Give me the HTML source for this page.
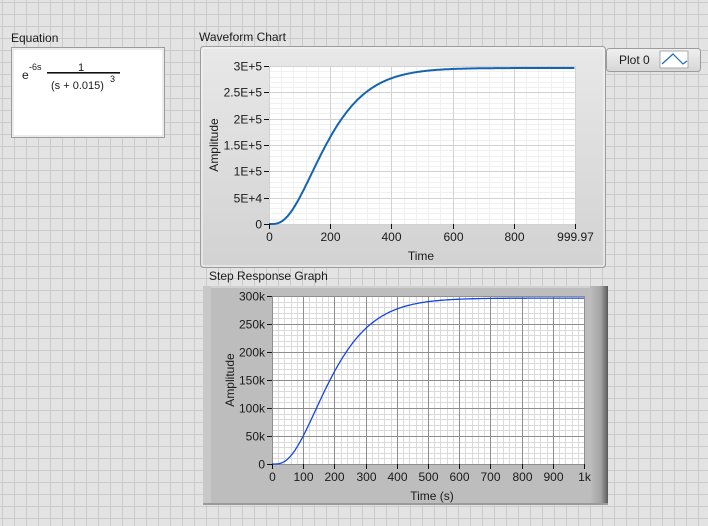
<!DOCTYPE html>
<html><head><meta charset="utf-8"><style>
html,body{margin:0;padding:0;width:708px;height:526px;overflow:hidden;background:#e3e3e3;}
svg{display:block;font-family:"Liberation Sans",sans-serif;}
text{font-size:11px;fill:#1a1a1a;}
</style></head><body>
<svg id="s" width="708" height="526" xmlns="http://www.w3.org/2000/svg">
<defs>
<pattern id="bg" x="2" y="2" width="12" height="12" patternUnits="userSpaceOnUse">
<rect width="12" height="12" fill="#e3e3e3"/><path d="M0.5 0V12M0 0.5H12" stroke="#cbcbcb" stroke-width="1"/>
</pattern>
<linearGradient id="wf" x1="0" y1="0" x2="0" y2="1"><stop offset="0" stop-color="#e8e8e8"/><stop offset="1" stop-color="#d2d2d2"/></linearGradient>
<linearGradient id="rs" x1="0" y1="0" x2="1" y2="0"><stop offset="0" stop-color="#bdbdbd"/><stop offset="0.6" stop-color="#a4a4a4"/><stop offset="1" stop-color="#5a5a5a"/></linearGradient>
<linearGradient id="lg" x1="0" y1="0" x2="0" y2="1"><stop offset="0" stop-color="#f0f0f0"/><stop offset="1" stop-color="#d6d6d6"/></linearGradient>
</defs>
<rect width="708" height="526" fill="url(#bg)"/>

<!-- Equation -->
<text x="11" y="42" style="font-size:12px">Equation</text>
<rect x="11.5" y="47.5" width="153" height="90" fill="#fff" stroke="#9a9a9a"/>
<rect x="13" y="49" width="150" height="87" fill="none" stroke="#d8d8d8"/>
<text x="22" y="79" style="font-size:12px">e</text>
<text x="29" y="70" style="font-size:9px">-6s</text>
<text x="78" y="71" style="font-size:11px">1</text>
<rect x="47" y="72" width="73" height="1.6" fill="#111"/>
<text x="51" y="89" style="font-size:11px">(s + 0.015)</text>
<text x="110" y="82" style="font-size:9px">3</text>

<!-- Waveform chart -->
<text x="199" y="41" style="font-size:12px">Waveform Chart</text>
<rect x="200.5" y="46.5" width="405" height="221" rx="3" fill="url(#wf)" stroke="#9c9c9c"/>
<rect x="202" y="48" width="402" height="218" rx="2" fill="none" stroke="#f6f6f6"/>
<g id="top"></g>
<text x="218" y="145" transform="rotate(-90 218 145)" text-anchor="middle" style="font-size:12px">Amplitude</text>
<text x="421" y="260" text-anchor="middle" style="font-size:12px">Time</text>

<!-- Legend -->
<rect x="606.5" y="48.5" width="94" height="23" rx="3" fill="url(#lg)" stroke="#9c9c9c"/>
<text x="619" y="64" style="font-size:12px">Plot 0</text>
<rect x="660" y="51" width="28" height="17" fill="#fff" stroke="#aaa"/>
<path d="M662 64 L673 54 L683 64 L687 61" fill="none" stroke="#1e6bb8" stroke-width="1.2"/>

<!-- Step response -->
<text x="209" y="280" style="font-size:12px">Step Response Graph</text>
<rect x="203" y="286" width="405" height="219" fill="#bdbdbd"/>
<rect x="203" y="286" width="405" height="2" fill="#d0d0d0"/>
<rect x="203" y="286" width="8" height="219" fill="#c8c8c8"/>
<rect x="590" y="286" width="18" height="219" fill="url(#rs)"/>
<rect x="203" y="503" width="405" height="2" fill="#9a9a9a"/>
<g id="bot"></g>
<text x="234" y="380" transform="rotate(-90 234 380)" text-anchor="middle" style="font-size:12px">Amplitude</text>
<text x="432" y="500" text-anchor="middle" style="font-size:12px">Time (s)</text>
</svg>
<script>
var NS="http://www.w3.org/2000/svg";
function el(p,t,a,txt){var e=document.createElementNS(NS,t);for(var k in a)e.setAttribute(k,a[k]);if(txt!=null)e.textContent=txt;p.appendChild(e);return e;}
function f(t){if(t<6)return 0;var x=0.015*(t-6);var K=1/Math.pow(0.015,3);return K*(1-Math.exp(-x)*(1+x+x*x/2));}
function plot(g,o){
 el(g,'rect',{x:o.x0,y:o.y0,width:o.x1-o.x0,height:o.y1-o.y0,fill:'#fff'});
 var d='';
 for(var i=0;i<=o.nxm;i++){var x=Math.round(o.x0+(o.x1-o.x0)*i/o.nxm)+0.5;d+='M'+x+' '+o.y0+'V'+o.y1;}
 for(var i=0;i<=o.nym;i++){var y=Math.round(o.y0+(o.y1-o.y0)*i/o.nym)+0.5;d+='M'+o.x0+' '+y+'H'+o.x1;}
 el(g,'path',{d:d,stroke:o.minc,'stroke-width':1,fill:'none'});
 d='';
 o.xt.forEach(function(v){var x=Math.round(o.x0+(o.x1-o.x0)*v/o.xmax)+0.5;d+='M'+x+' '+o.y0+'V'+o.y1;});
 o.yt.forEach(function(v){var y=Math.round(o.y1-(o.y1-o.y0)*v/o.ymax)+0.5;d+='M'+o.x0+' '+y+'H'+o.x1;});
 el(g,'path',{d:d,stroke:o.majc,'stroke-width':1,fill:'none'});
 var p='';
 for(var t=0;t<=o.xmax;t+=2){var x=o.x0+(o.x1-o.x0)*t/o.xmax;var y=o.y1-(o.y1-o.y0)*f(t)/o.ymax;p+=(t?'L':'M')+x.toFixed(1)+' '+y.toFixed(1);}
 el(g,'path',{d:p,stroke:o.cc,'stroke-width':o.cw,fill:'none'});
 var tk='';
 o.yt.forEach(function(v,i){var y=Math.round(o.y1-(o.y1-o.y0)*v/o.ymax)+0.5;tk+='M'+(o.x0-5)+' '+y+'H'+o.x0;el(g,'text',{x:o.x0-7,y:y+4,'text-anchor':'end',style:'font-size:12px'},o.yl[i]);});
 o.xt.forEach(function(v,i){var x=Math.round(o.x0+(o.x1-o.x0)*v/o.xmax)+0.5;tk+='M'+x+' '+o.y1+'v5';el(g,'text',{x:x,y:o.y1+17,'text-anchor':'middle',style:'font-size:12px'},o.xl[i]);});
 el(g,'path',{d:tk,stroke:'#111','stroke-width':1});
}
plot(document.getElementById('top'),{x0:269,x1:575,y0:66,y1:224,xmax:999.97,ymax:300000,nxm:25,nym:30,
 xt:[0,200,400,600,800,999.97],xl:['0','200','400','600','800','999.97'],
 yt:[0,50000,100000,150000,200000,250000,300000],yl:['0','5E+4','1E+5','1.5E+5','2E+5','2.5E+5','3E+5'],
 minc:'#f0f0f0',majc:'#d2d2d2',cc:'#1464b4',cw:2});
plot(document.getElementById('bot'),{x0:272,x1:584,y0:296,y1:464,xmax:1000,ymax:300000,nxm:50,nym:30,
 xt:[0,100,200,300,400,500,600,700,800,900,1000],xl:['0','100','200','300','400','500','600','700','800','900','1k'],
 yt:[0,50000,100000,150000,200000,250000,300000],yl:['0','50k','100k','150k','200k','250k','300k'],
 minc:'#dadada',majc:'#8e8e8e',cc:'#1446e6',cw:1.3});
</script>
</body></html>
